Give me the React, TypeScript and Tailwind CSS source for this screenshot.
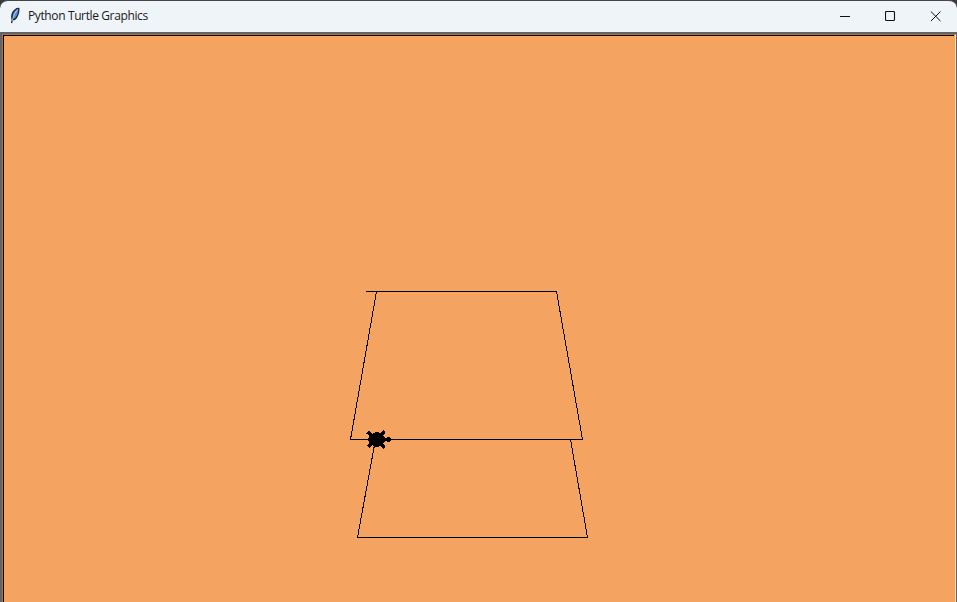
function Feather() {
  return (
    <svg width="16" height="18" viewBox="0 0 16 18" className="-mt-px shrink-0">
      <path d="M3 16 L3.6 12.8 C2.4 8.6 3.8 4.6 6.8 2.2 C8.6 1 10.2 .6 11.4 1 C11.9 4 10.8 8.4 8.6 11.4 C7.4 12.8 6.2 13.3 5 13.2 L4.2 16.2Z" fill="#182234" />
      <path d="M4.8 11.8 C4.2 8 5.4 5 7.7 3.2 L10.2 1.8 C10.5 5 9.3 8.4 7.6 10.6 C6.7 11.6 5.8 12 4.8 11.8Z" fill="#568ed8" />
      <path d="M4.2 14 C5 9.8 6.8 5.8 9.5 2.4" fill="none" stroke="#c7def7" strokeWidth=".7" />
    </svg>
  );
}

function TitleBar() {
  return (
    <div className="h-8 shrink-0 bg-[#3a3a3e]">
      <header className="flex h-8 items-center rounded-t-lg border-t border-[#45454a] bg-[#eff4f9] pl-2">
        <Feather />
        <h1 className="-mt-px ml-1 w-[121px] whitespace-nowrap font-['Open_Sans','Noto_Sans',sans-serif] text-[12px] leading-4 tracking-[-0.38px] text-[#191919]">
          Python Turtle Graphics
        </h1>
        <div className="-mt-px ml-auto flex text-[#111]">
          <button className="flex h-[30px] w-[45px] items-center justify-center" aria-label="Minimize">
            <svg width="11" height="11" shapeRendering="crispEdges"><path d="M0 5.5H10" stroke="currentColor" /></svg>
          </button>
          <button className="flex h-[30px] w-[45px] items-center justify-center" aria-label="Maximize">
            <svg width="11" height="11"><rect x=".5" y=".5" width="9" height="9" rx="1" fill="none" stroke="currentColor" strokeWidth="1.1" /></svg>
          </button>
          <button className="flex h-[30px] w-[44px] items-center justify-center" aria-label="Close">
            <svg width="11" height="11"><path d="M.9 .5L10.5 10.1M10.5 .5L.9 10.1" stroke="currentColor" strokeWidth="1" /></svg>
          </button>
        </div>
      </header>
    </div>
  );
}

export default function App() {
  return (
    <main className="flex h-[602px] w-[957px] flex-col overflow-hidden bg-[#f4a460]">
      <TitleBar />
      <section className="flex-1 border-l-2 border-r border-t-2 border-[#646464]">
        <div className="h-full border-l border-r border-t border-l-[#ad7040] border-r-[#ffe0ad] border-t-[#ad7040] pr-px">
          <div className="h-full border-l border-t border-black">
            <svg width="950" height="566" viewBox="4 36 950 566" shapeRendering="crispEdges" className="block" fill="none" stroke="black">
              <path d="M366 291.5H557M350 439.5H583M357 537.5H588" />
              <path d="M376.5 291.5L350.5 439.5M556.5 291.5L582.5 439.5M375.5 439.5L357.5 537.5M570.5 439.5L587.5 537.5" />
              <polygon
                transform="translate(375.5 439.5)"
                fill="black"
                strokeWidth="1.4"
                points="15.5,0 14,2 10,1 7,4 9,7 8,8.5 5,6 1,7 -3,5 -6,8 -8,6 -5,4 -7,0 -5,-4 -8,-6 -6,-8 -3,-5 1,-7 5,-6 8,-8.5 9,-7 7,-4 10,-1 14,-2"
              />
            </svg>
          </div>
        </div>
      </section>
    </main>
  );
}
